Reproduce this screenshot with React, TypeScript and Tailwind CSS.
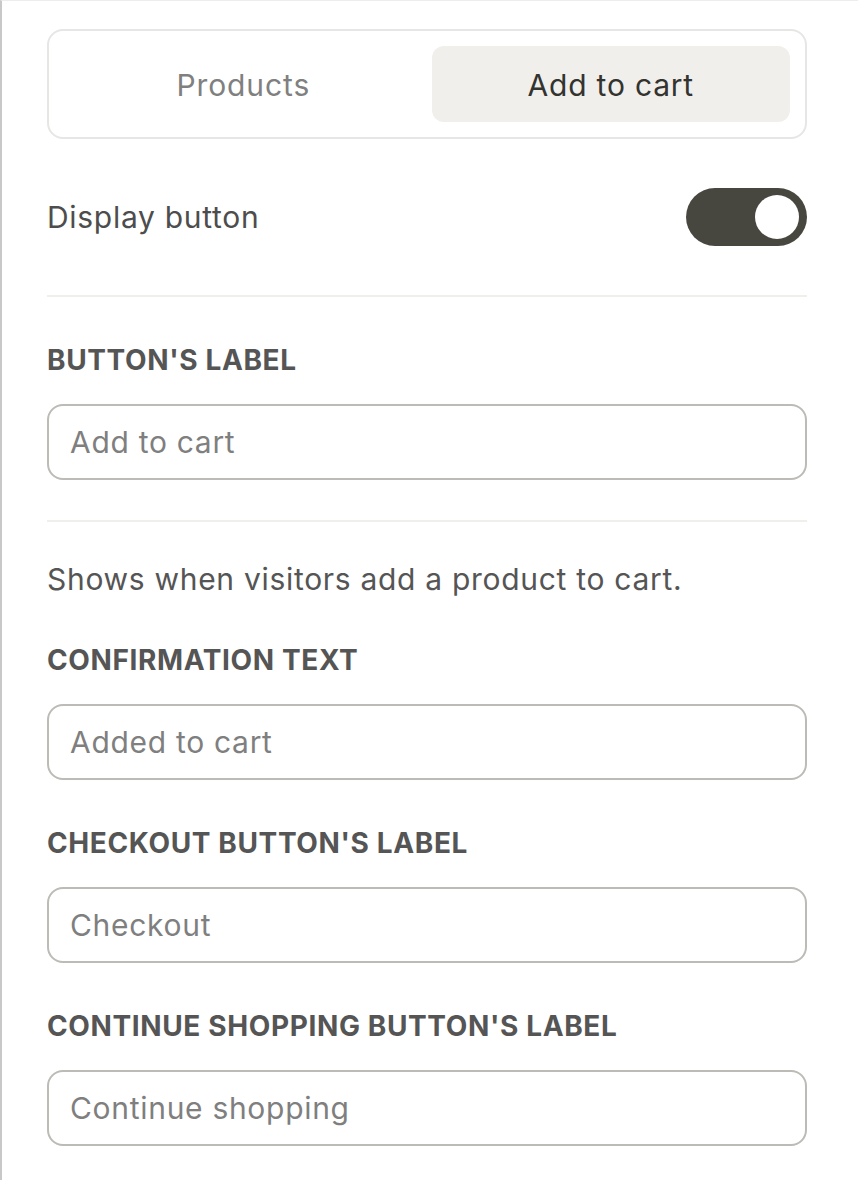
import React, { useState } from 'react';

const font = { fontFamily: 'Inter, "Noto Sans", sans-serif' };

function Field({ label, placeholder }: { label: string; placeholder: string }) {
  return (
    <div>
      <div className="text-[28px] leading-[32px] font-bold text-[#555555] tracking-[0.62px]">{label}</div>
      <input
        type="text"
        placeholder={placeholder}
        className="mt-[28px] w-full h-[76px] rounded-[16px] border-2 border-[#bcbbb6] px-[21px] text-[30px] tracking-[0.7px] text-[#333] placeholder:text-[#7f7f7f] outline-none"
      />
    </div>
  );
}

export default function App() {
  const [tab, setTab] = useState<'products' | 'cart'>('cart');
  const [on, setOn] = useState(true);

  return (
    <div className="min-h-screen bg-white border-l-2 border-l-[#c8c8c8] border-t border-t-[#ededed]" style={font}>
      <div className="pl-[45px] pr-[51px] pt-[28px] pb-[40px]">
        {/* Tabs */}
        <div className="h-[110px] rounded-[16px] border-2 border-[#e6e6e4] p-[15px] flex gap-[9px]">
          <button
            onClick={() => setTab('products')}
            className={`flex-1 rounded-[12px] text-[30px] tracking-[0.9px] pt-[2px] ${tab === 'products' ? 'bg-[#f0efeb] text-[#333330]' : 'text-[#808080]'}`}
          >
            Products
          </button>
          <button
            onClick={() => setTab('cart')}
            className={`flex-1 rounded-[12px] text-[30px] tracking-[0.8px] pt-[2px] ${tab === 'cart' ? 'bg-[#f0efeb] text-[#333330]' : 'text-[#808080]'}`}
          >
            Add to cart
          </button>
        </div>

        {/* Display toggle */}
        <div className="mt-[49px] h-[58px] flex items-center justify-between">
          <span className="text-[30px] tracking-[0.7px] text-[#4d4d4d]">Display button</span>
          <button
            onClick={() => setOn(!on)}
            className={`w-[121px] h-[58px] rounded-full flex items-center px-[8px] ${on ? 'bg-[#48473f] justify-end' : 'bg-[#d6d5d0] justify-start'}`}
          >
            <span className="w-[44px] h-[44px] rounded-full bg-white" />
          </button>
        </div>

        <div className="mt-[49px] h-[2px] bg-[#f0efeb]" />

        <div className="mt-[47px]">
          <Field label="BUTTON'S LABEL" placeholder="Add to cart" />
        </div>

        <div className="mt-[40px] h-[2px] bg-[#f0efeb]" />

        <p className="mt-[40px] text-[30px] leading-[34px] tracking-[0.7px] text-[#555555]">Shows when visitors add a product to cart.</p>

        <div className="mt-[48px] flex flex-col gap-[47px]">
          <Field label="CONFIRMATION TEXT" placeholder="Added to cart" />
          <Field label="CHECKOUT BUTTON'S LABEL" placeholder="Checkout" />
          <Field label="CONTINUE SHOPPING BUTTON'S LABEL" placeholder="Continue shopping" />
        </div>
      </div>
    </div>
  );
}
